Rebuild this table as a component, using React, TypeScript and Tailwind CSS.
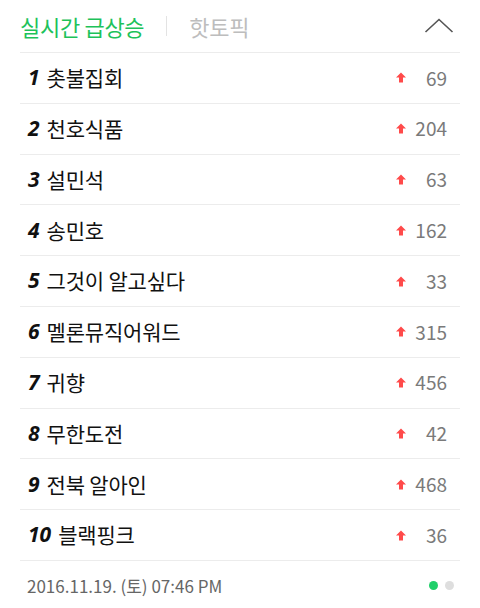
import React from "react";

const items = [
  { name: "촛불집회", count: 69 },
  { name: "천호식품", count: 204 },
  { name: "설민석", count: 63 },
  { name: "송민호", count: 162 },
  { name: "그것이 알고싶다", count: 33 },
  { name: "멜론뮤직어워드", count: 315 },
  { name: "귀향", count: 456 },
  { name: "무한도전", count: 42 },
  { name: "전북 알아인", count: 468 },
  { name: "블랙핑크", count: 36 },
];

const UpArrow = () => (
  <svg width="10" height="11" viewBox="0 0 10 11" className="shrink-0">
    <polygon points="5,0.5 10,5.5 7,5.5 7,10.5 3,10.5 3,5.5 0,5.5" fill="#ff4a4a" />
  </svg>
);

export default function App() {
  return (
    <div
      className="w-[480px] h-[608px] bg-white px-5"
      style={{ fontFamily: '"Noto Sans CJK KR", "Noto Sans", sans-serif' }}
    >
      {/* tabs */}
      <div className="h-[53px] flex items-center border-b border-[#ececec]">
        <span className="text-[22px] text-[#1dc25a] tracking-[-0.3px]">실시간 급상승</span>
        <span className="ml-[22px] mr-[22px] w-px h-[20px] bg-[#e3e3e3]" />
        <span className="text-[22px] text-[#bdbdbd] tracking-[-0.3px]">핫토픽</span>
        <svg width="30" height="16" viewBox="0 0 30 16" className="ml-auto mr-[6px]">
          <polyline points="1.5,14 15,1.5 28.5,14" fill="none" stroke="#555" strokeWidth="1.6" />
        </svg>
      </div>

      {/* list */}
      <ul>
        {items.map((item, i) => (
          <li key={item.name} className="h-[50.8px] flex items-center border-b border-[#ececec] pl-2">
            <span
              className="text-[21px] font-bold italic text-[#111] mr-[7px]"
              style={{ fontFamily: '"Open Sans", "Liberation Sans", sans-serif' }}
            >
              {i + 1}
            </span>
            <span className="text-[21px] text-[#111] tracking-[-0.2px]">{item.name}</span>
            <div className="ml-auto flex items-center gap-[5px] mr-[13px]">
              <UpArrow />
              <span className="w-[36px] text-right text-[19px] text-[#7a7a7a]">{item.count}</span>
            </div>
          </li>
        ))}
      </ul>

      {/* footer */}
      <div className="h-[50px] flex items-center pl-[7px]">
        <span className="text-[17px] text-[#666]">2016.11.19. (토) 07:46 PM</span>
        <div className="ml-auto flex items-center gap-[7px] mr-[6px]">
          <span className="w-[9px] h-[9px] rounded-full bg-[#21d06a]" />
          <span className="w-[9px] h-[9px] rounded-full bg-[#dedede]" />
        </div>
      </div>
    </div>
  );
}
